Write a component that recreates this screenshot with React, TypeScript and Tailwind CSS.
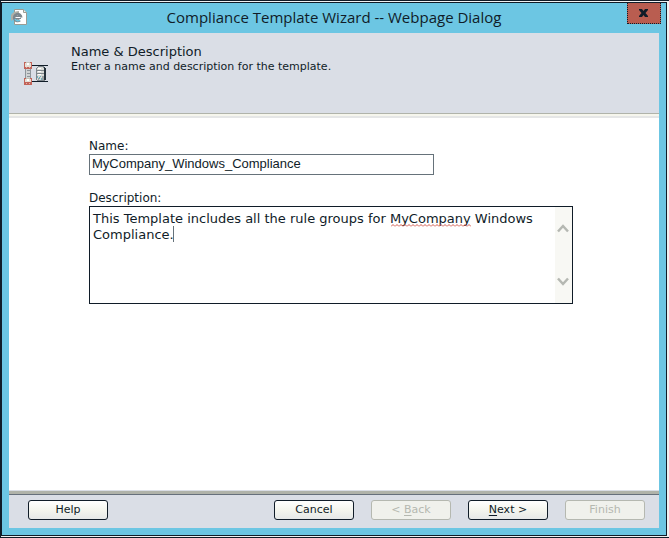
import { useState } from "react";
import type { ButtonHTMLAttributes } from "react";

const buttonBase =
  "h-5 w-20 shrink-0 rounded-[3px] border text-center font-[Verdana,'DejaVu_Sans',sans-serif] text-[11px] leading-4";

function WizardButton({ disabled, ...rest }: ButtonHTMLAttributes<HTMLButtonElement>) {
  const look = disabled
    ? "border-[#b5b8b0] bg-[#f0f1ec] text-[#b5b8b0]"
    : "border-[#101c28] bg-linear-to-b from-white via-[#f4f5ee] to-[#e6e8e8] text-[#101c28]";
  return <button type="button" disabled={disabled} className={`${buttonBase} ${look}`} {...rest} />;
}

function PageIcon() {
  return (
    <svg width="18" height="18" viewBox="0 0 18 18" aria-hidden="true">
      <path d="M3.5 .5h9l3 3v12h-12z" fill="#fff" stroke="#9a9c94" />
      <path d="M12.5 .5v3h3" fill="#eef0ea" stroke="#9a9c94" />
      <path d="M1 11.5C-.5 7 3 3.5 8 3.5" fill="none" stroke="#b0b0a6" strokeWidth="3" />
      <path d="M10 8.5H4M10 8.5a3.3 3.3 0 1 0-1.2 2.6" fill="none" stroke="#7d888e" strokeWidth="3" />
      <path d="M9.5 8.5H4.5M9.5 8.5" fill="none" stroke="#fff" strokeWidth="1" />
      <path d="M4 10a3.3 3.3 0 0 0 5 1" fill="none" stroke="#6cc6e3" strokeWidth="1.5" />
    </svg>
  );
}

function TemplateIcon() {
  return (
    <svg width="24" height="25" viewBox="0 0 24 25" shapeRendering="crispEdges" aria-hidden="true">
      <path d="M8 3h16v1H8zM8 19h16v1H8z" fill="#101c28" />
      <path d="M2 7h5v9H2z" fill="#d0d3d4" />
      <path d="M1 7h1v9H1zM6 7h1v9H6z" fill="#8e959b" />
      <path d="M3 8h3v1H3zM3 11h3v1H3zM3 14h3v1H3z" fill="#8e959b" />
      <path d="M0 0h8v7H0zM0 16h8v7H0z" fill="#c26358" />
      <path d="M1 1h6v4H1zM1 17h6v3H1z" fill="#e4dfd6" />
      <path d="M2 0h4v1H2zM2 16h4v1H2z" fill="#c5c4b9" />
      <path d="M3 1h2v2H3zM3 17h2v2H3z" fill="#fff" />
      <path d="M2 5h1v1H2zM5 5h1v1H5zM2 21h1v1H2zM5 21h1v1H5z" fill="#e4b0a8" />
      <path d="M13 5h1V4h6v1h1v1h1v12h-1v1h-8v-1h-1V6h1z" fill="#7f878c" />
      <path d="M20 5h1v1h1v12h-2z" fill="#25313a" />
      <path d="M14 5h5v1h1v2h-7V6h1zM13 9h7v2h-7zM13 12h7v6h-7z" fill="#d9dbd8" />
      <path d="M14 6h3v1h-3zM14 9h3v1h-3zM14 12h3v1h-3z" fill="#fff" />
      <path d="M13 14h1v2h-1zM15 15h1v2h-1zM16 14h1v1h-1zM17 16h1v2h-1z" fill="#6fafbd" />
      <path d="M14 16h1v2h-1zM18 14h2v4h-2z" fill="#9ba1a3" />
    </svg>
  );
}

function Chevron({ down = false }: { down?: boolean }) {
  return (
    <svg width="12" height="9" viewBox="0 0 12 9" className={down ? "rotate-180" : ""} aria-hidden="true">
      <path d="M1 7.5 6 2l5 5.5" fill="none" stroke="#b5b8b2" strokeWidth="2.5" />
    </svg>
  );
}

export default function App() {
  const [name, setName] = useState("MyCompany_Windows_Compliance");
  const [description, setDescription] = useState(
    "This Template includes all the rule groups for MyCompany Windows Compliance.",
  );

  return (
    <div className="flex min-h-screen flex-col border-y border-l border-[#101c28] bg-[#f0f1f1] pt-px pr-[2px] pb-px font-[Verdana,'DejaVu_Sans',sans-serif] text-[#101c28]">
      <div className="flex grow flex-col border border-[#101c28] bg-[#6cc6e3] px-[7px] pb-[7px]">
        <div className="flex h-[30px] items-start justify-between">
          <div className="pt-[6px] pl-[2px]">
            <PageIcon />
          </div>
          <h1 className="pt-1 pl-[12px] font-['Open_Sans','Noto_Sans',sans-serif] text-[15px] leading-5">
            Compliance Template Wizard -- Webpage Dialog
          </h1>
          <button
            type="button"
            aria-label="Close"
            className="-mr-[2px] flex h-[21px] w-[34px] items-center justify-center border border-t-0 border-dotted border-[#101c28] bg-[#b95d50]"
          >
            <svg width="9" height="8" viewBox="0 0 9 8" aria-hidden="true">
              <path d="M0 0h3l1.5 2L6 0h3v1L6.5 4 9 7v1H6L4.5 6 3 8H0V7l2.5-3L0 1z" fill="#101c28" />
            </svg>
          </button>
        </div>

        <header className="flex h-[81px] items-start border-b border-[#b0b3aa] bg-[#dadee6]">
          <div className="w-[62px] pt-[29px] pl-[15px]">
            <TemplateIcon />
          </div>
          <div className="pt-[11px]">
            <h2 className="text-[13px] leading-4">Name &amp; Description</h2>
            <p className="text-[11px] leading-[14px]">Enter a name and description for the template.</p>
          </div>
        </header>
        <div className="h-1 border-b-2 border-[#e5e6e6] bg-[#f6f6ed]" />

        <main className="grow bg-white pt-[20px] pr-4 pl-[80px]">
          <label htmlFor="name" className="block text-[12px] leading-4">
            Name:
          </label>
          <input
            id="name"
            value={name}
            spellCheck={false}
            onChange={(e) => setName(e.target.value)}
            className="block h-[21px] w-full max-w-[345px] border border-[#66727a] bg-white px-[2px] pb-[2px] font-[Arial,'Liberation_Sans',sans-serif] text-[13px] leading-4 outline-none"
          />
          <label htmlFor="description" className="mt-[15px] block text-[12px] leading-4">
            Description:
          </label>
          <div className="relative flex h-[98px] max-w-[484px] border border-[#101c28] bg-white">
            <textarea
              id="description"
              value={description}
              spellCheck={false}
              onChange={(e) => setDescription(e.target.value)}
              className="grow resize-none overflow-hidden py-1 pl-[3px] text-[13px] leading-4 outline-none"
            />
            <div className="flex w-[17px] shrink-0 flex-col items-start justify-between bg-[#f8f8f4] py-[17px] pl-[2px]">
              <Chevron />
              <Chevron down />
            </div>
            <svg
              width="80"
              height="3"
              className="pointer-events-none absolute top-[17px] left-[301px]"
              aria-hidden="true"
            >
              <defs>
                <pattern id="squiggle" width="4" height="3" patternUnits="userSpaceOnUse">
                  <path d="M0 2.5 2 .5l2 2" fill="none" stroke="#d0584b" />
                </pattern>
              </defs>
              <rect width="80" height="3" fill="url(#squiggle)" />
            </svg>
            <span className="pointer-events-none absolute top-[19px] left-[83px] h-4 w-px bg-[#66727a]" />
          </div>
        </main>

        <footer className="border-t border-[#dadee6]">
          <div className="h-1 border-b border-[#66707c] bg-[#b0b3aa]" />
          <div className="flex h-[33px] items-start justify-between bg-[#dadee6] pt-[5px] pr-[14px] pl-[19px]">
            <WizardButton>Help</WizardButton>
            <div className="flex gap-[17px]">
              <WizardButton>Cancel</WizardButton>
              <WizardButton disabled>
                &lt; <u className="underline-offset-2">B</u>ack
              </WizardButton>
              <WizardButton>
                <u className="underline-offset-2">N</u>ext &gt;
              </WizardButton>
              <WizardButton disabled>Finish</WizardButton>
            </div>
          </div>
        </footer>
      </div>
    </div>
  );
}
